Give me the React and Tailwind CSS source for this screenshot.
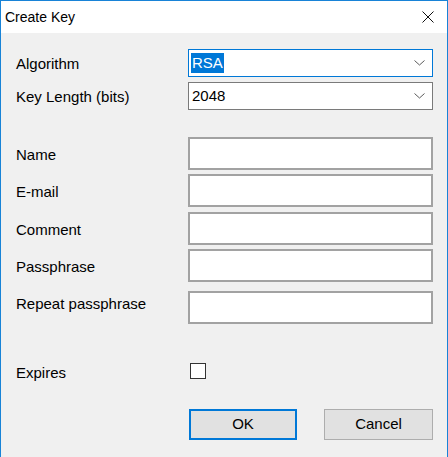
import React from "react";

const font = { fontFamily: '"Liberation Sans", Arial, sans-serif' };

const Chevron = () => (
  <svg width="11" height="6" viewBox="0 0 11 6" className="shrink-0">
    <polyline points="0.5,0.5 5.5,5 10.5,0.5" fill="none" stroke="#5a5a5a" strokeWidth="1" />
  </svg>
);

const Row = ({ label, className, labelClass = "pt-[3px]", children }) => (
  <div className={`flex items-center ${className}`}>
    <div className={`w-[187px] shrink-0 pl-[15px] text-[15px] text-black ${labelClass}`}>{label}</div>
    {children}
  </div>
);

const TextBox = () => (
  <div className="w-[245px] h-[33px] bg-white border-2 border-[#a2a2a2]" />
);

const App = () => {
  return (
    <div
      className="w-[448px] h-[457px] bg-[#f0f0f0] border-x border-t border-[#1883d7] flex flex-col overflow-hidden"
      style={font}
    >
      {/* Title bar */}
      <div className="h-[32px] bg-white flex items-center justify-between pl-[4px] pr-[13px] shrink-0">
        <span className="text-[14px] text-black">Create Key</span>
        <svg width="12" height="12" viewBox="0 0 12 12">
          <path d="M0.5 0.5 L11.5 11.5 M11.5 0.5 L0.5 11.5" stroke="#111" strokeWidth="1" />
        </svg>
      </div>

      <Row label="Algorithm" className="mt-[16px] h-[28px]">
        <div className="w-[245px] h-[28px] bg-white border border-[#0078d7] flex items-center justify-between pl-[2px] pr-[7px]">
          <span className="bg-[#0078d7] text-white text-[15px] leading-[20px] px-[1px]">RSA</span>
          <Chevron />
        </div>
      </Row>

      <Row label="Key Length (bits)" className="mt-[5px] h-[28px]">
        <div className="w-[245px] h-[28px] bg-white border border-[#7a7a7a] flex items-center justify-between pl-[3px] pr-[7px]">
          <span className="text-[15px] text-black">2048</span>
          <Chevron />
        </div>
      </Row>

      <Row label="Name" className="mt-[27px]">
        <TextBox />
      </Row>
      <Row label="E-mail" className="mt-[4px]">
        <TextBox />
      </Row>
      <Row label="Comment" className="mt-[5px]">
        <TextBox />
      </Row>
      <Row label="Passphrase" className="mt-[4px]">
        <TextBox />
      </Row>
      <Row label="Repeat passphrase" className="mt-[9px]" labelClass="mb-[7px]">
        <TextBox />
      </Row>

      <Row label="Expires" className="mt-[39px] h-[16px]" labelClass="mt-[4px]">
        <div className="ml-[2px] w-[16px] h-[16px] bg-white border border-[#333]" />
      </Row>

      {/* Buttons */}
      <div className="flex mt-[30px] pl-[188px] gap-[27px]">
        <button className="w-[108px] h-[31px] bg-[#e1e1e1] border-2 border-[#0078d7] text-[15px] text-black">
          OK
        </button>
        <button className="w-[109px] h-[31px] bg-[#e1e1e1] border border-[#adadad] text-[15px] text-black">
          Cancel
        </button>
      </div>
    </div>
  );
};

export default App;
